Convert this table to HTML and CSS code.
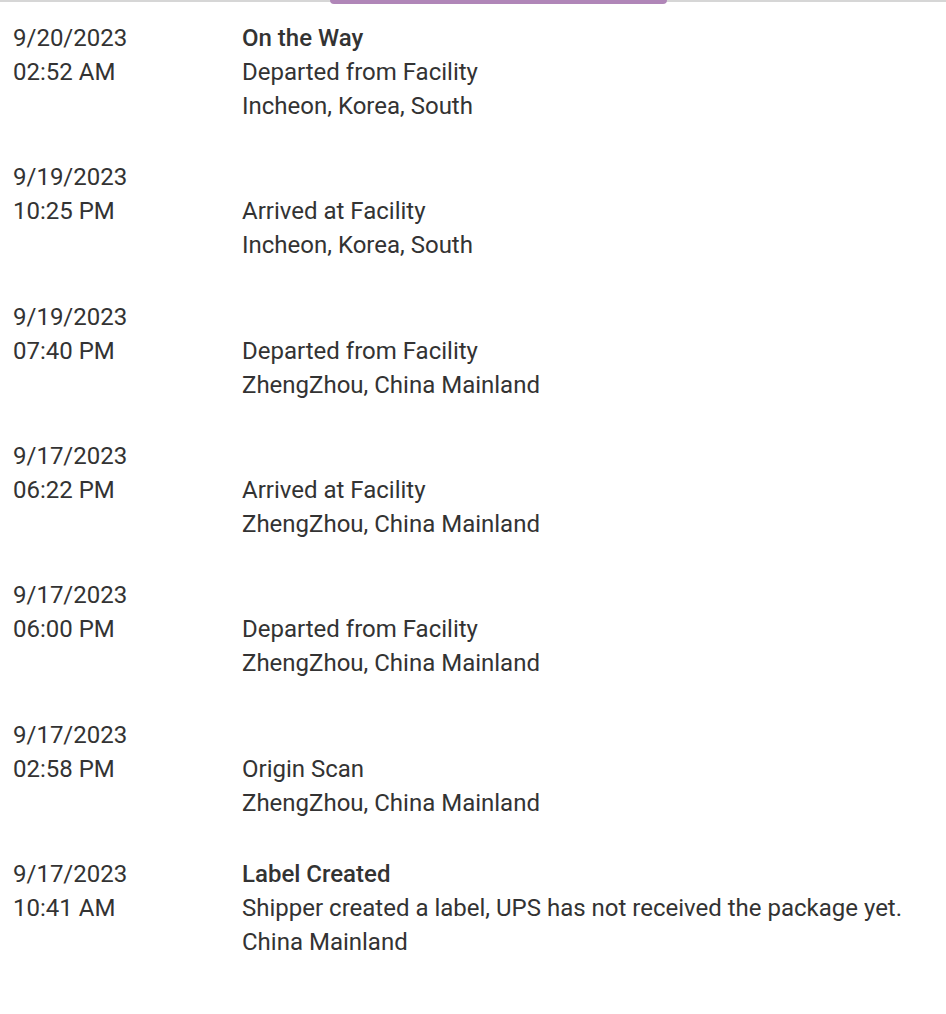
FILE: index.html
```html
<!DOCTYPE html>
<html>
<head>
<meta charset="utf-8">
<link rel="stylesheet" href="styles.css">
</head>
<body>
<div class="topbar"><div class="tab-indicator"></div></div>
<div class="history">
  <div class="row">
    <div class="when"><div>9/20/2023</div><div>02:52 AM</div></div>
    <div class="what"><div class="status">On the Way</div><div>Departed from Facility</div><div>Incheon, Korea, South</div></div>
  </div>
  <div class="row">
    <div class="when"><div>9/19/2023</div><div>10:25 PM</div></div>
    <div class="what"><div class="status"></div><div>Arrived at Facility</div><div>Incheon, Korea, South</div></div>
  </div>
  <div class="row">
    <div class="when"><div>9/19/2023</div><div>07:40 PM</div></div>
    <div class="what"><div class="status"></div><div>Departed from Facility</div><div>ZhengZhou, China Mainland</div></div>
  </div>
  <div class="row">
    <div class="when"><div>9/17/2023</div><div>06:22 PM</div></div>
    <div class="what"><div class="status"></div><div>Arrived at Facility</div><div>ZhengZhou, China Mainland</div></div>
  </div>
  <div class="row">
    <div class="when"><div>9/17/2023</div><div>06:00 PM</div></div>
    <div class="what"><div class="status"></div><div>Departed from Facility</div><div>ZhengZhou, China Mainland</div></div>
  </div>
  <div class="row">
    <div class="when"><div>9/17/2023</div><div>02:58 PM</div></div>
    <div class="what"><div class="status"></div><div>Origin Scan</div><div>ZhengZhou, China Mainland</div></div>
  </div>
  <div class="row">
    <div class="when"><div>9/17/2023</div><div>10:41 AM</div></div>
    <div class="what"><div class="status">Label Created</div><div>Shipper created a label, UPS has not received the package yet.</div><div>China Mainland</div></div>
  </div>
</div>
</body>
</html>
```
FILE: styles.css
```css
html, body {
  margin: 0;
  padding: 0;
  background: #ffffff;
}
body {
  font-family: Roboto, "Liberation Sans", sans-serif;
  font-size: 24px;
  line-height: 34px;
  color: #333333;
}
.topbar {
  height: 2px;
  background: #d6d6d6;
  position: relative;
}
.tab-indicator {
  position: absolute;
  left: 330px;
  top: 0;
  width: 337px;
  height: 4px;
  background: #b086b8;
  border-radius: 0 0 4px 4px;
}
.history {
  display: flex;
  flex-direction: column;
  gap: 37.33px;
  padding: 19px 0 0 13px;
}
.row {
  display: grid;
  grid-template-columns: 229px 1fr;
}
.status {
  font-weight: 500;
  min-height: 34px;
}
```
